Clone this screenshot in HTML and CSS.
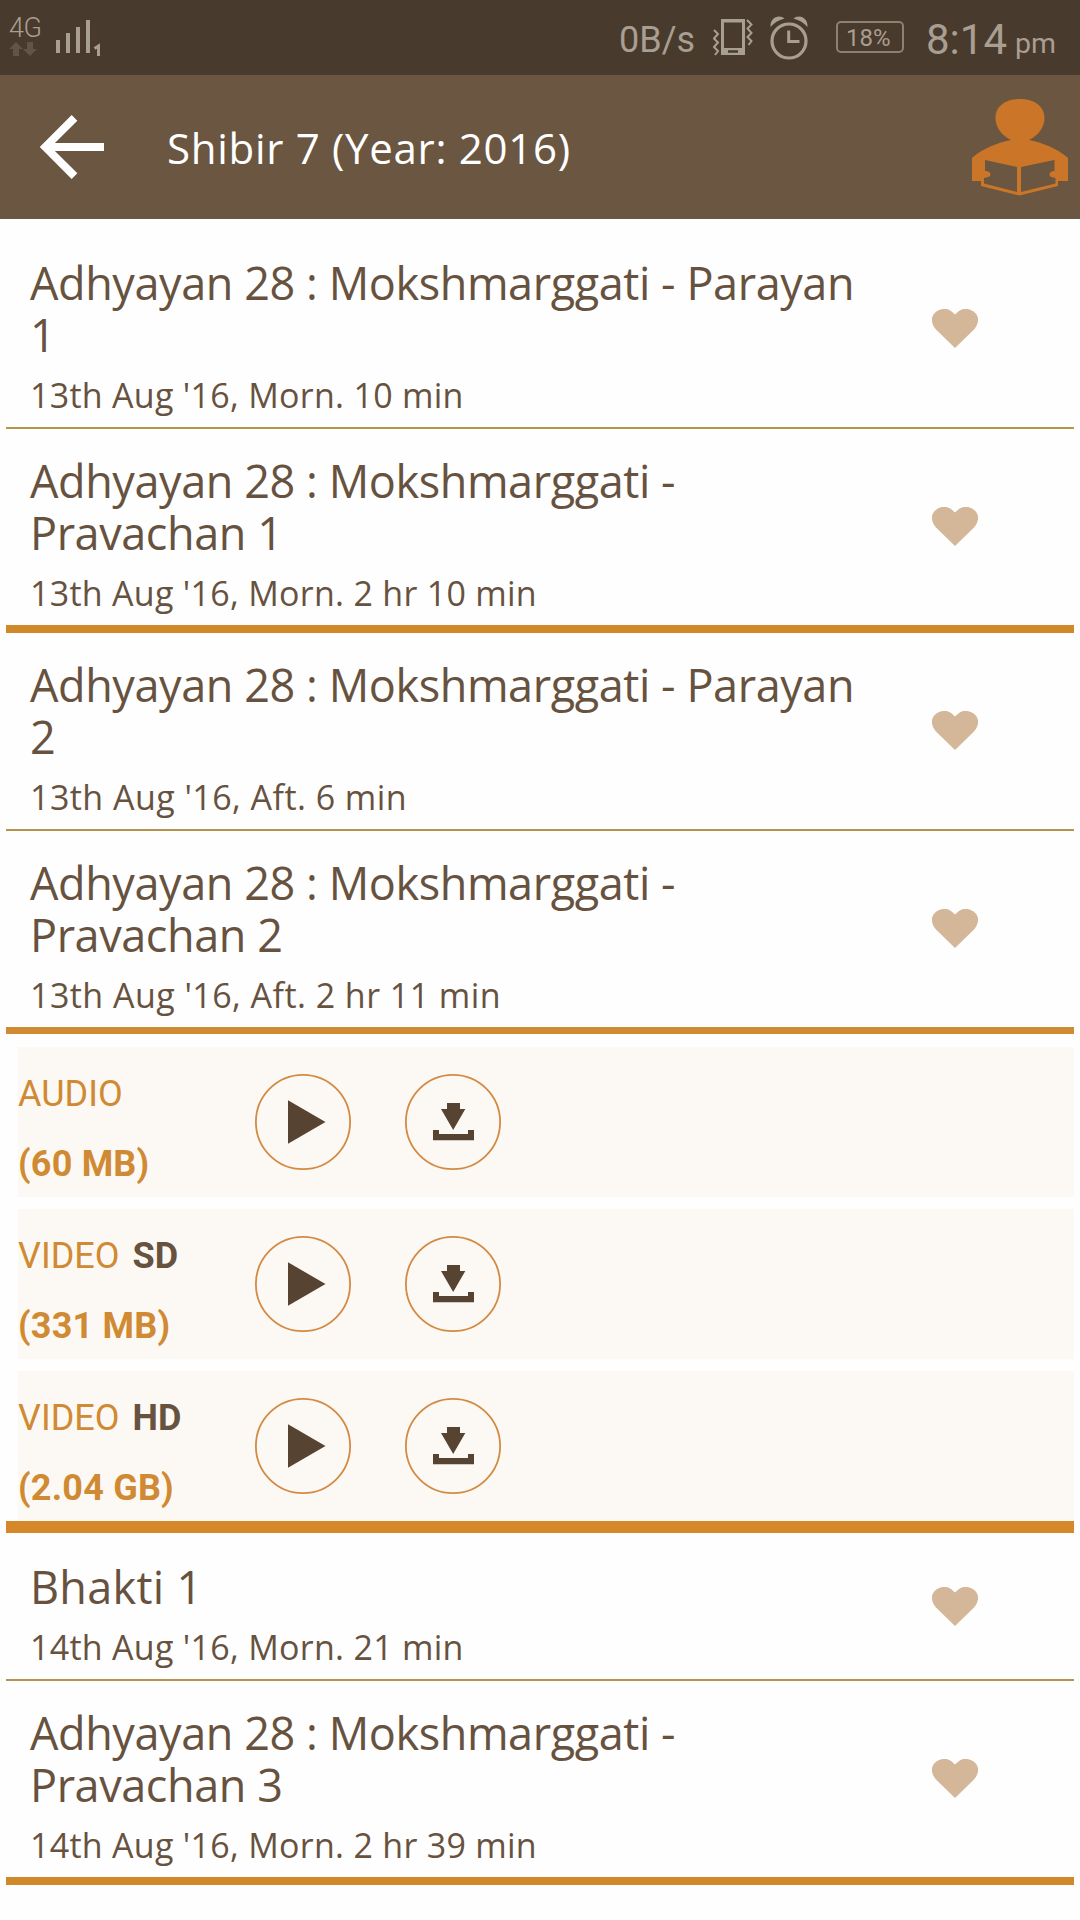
FILE: index.html
```html
<!DOCTYPE html>
<html lang="en">
<head>
<meta charset="utf-8">
<title>Shibir 7</title>
<link rel="stylesheet" href="styles.css">
</head>
<body>
<svg class="defs" width="0" height="0" aria-hidden="true">
  <symbol id="heart" viewBox="0 0 46 39"><path d="M23 39 4 20.500C-1 15-1.500 8 3 3.700 8-1.300 16-1.200 20.500 3.200L23 5.500l2.500-2.300C30-1.200 38-1.300 43 3.700 47.500 8 47 15 42 20.500Z"/></symbol>
  <symbol id="play" viewBox="0 0 96 96"><circle cx="48" cy="48" r="47.100" class="ring"/><path d="M33 26.300 70.500 48 33 69.800Z"/></symbol>
  <symbol id="download" viewBox="0 0 96 96"><circle cx="48" cy="48" r="47.100" class="ring"/><path d="M42 29h13v6h5.300L48.200 56 36 35h6ZM28 56h6v4h29v-4h6v10.200H28Z"/></symbol>
</svg>

<div class="status">
  <div class="network">
    <span class="network-type">4G</span>
    <svg class="network-arrows" width="28" height="14" viewBox="0 0 28 14"><path d="M7 0l7 7h-4v7H4V7H0ZM21 14l-7-7h4V0h6v7h4Z"/></svg>
  </div>
  <svg class="signal" width="46" height="38" viewBox="0 0 46 38"><g stroke-width="4" stroke-linecap="butt"><path d="M3 21v13M13 14v20M23 8v26M33 1v33"/><path d="M39.500 29.500 43.500 27v10" stroke-width="3" fill="none"/></g></svg>
  <span class="speed">0B/s</span>
  <svg class="vibrate" width="42" height="38" viewBox="0 0 42 38"><path fill-rule="evenodd" d="M8 0h24v36H8ZM11 3.500v25.500h18V3.500ZM15 31.200v2.500h10v-2.500Z" class="solid"/><path d="M1 11l4 4-4 4.500 4 4-4 4.500 4 4-3 4M34 1l4.500 4.500-4 4 4 4.500-4 4 4 4-3 4"/></svg>
  <svg class="alarm" width="38" height="44" viewBox="0 0 38 44"><circle cx="19" cy="25" r="17" stroke-width="3.200"/><path d="M18.700 14.500v11h10.800" stroke-width="3"/><path class="solid" d="M.5 11C0 5 4 .5 9 .5c2.500 0 4 .7 5.500 2C8.500 4 4 7 .5 11ZM37.500 11C38 5 34 .5 29 .5c-2.500 0-4 .7-5.500 2C29.500 4 34 7 37.500 11Z"/></svg>
  <span class="battery">18%</span>
  <span class="clock">8:14</span>
  <span class="meridiem">pm</span>
</div>

<header class="appbar">
  <svg class="back" width="64" height="64" viewBox="0 0 64 64"><path d="M64 32H6M34.500 2.800 5.300 32l29.200 29.200"/></svg>
  <h1 class="appbar-title">Shibir 7 (Year: 2016)</h1>
  <svg class="reader" width="96" height="97" viewBox="0 0 96 97"><path fill-rule="evenodd" d="M48 0C62 0 72.500 7 72.500 19c0 10-7 18-15.500 22 15 3 29 9 39 18v23H86v5L47.500 96.500 9 87v-5H0V59c10-9 24-15 39-18C30.500 37 23.500 29 23.500 19 23.500 7 34 0 48 0ZM13 61v11c3 0 5.500 1 5.500 3.500S15 78.500 12 79v5.500L45 93V68ZM82.500 61 49 68v25l34.500-8.500V79c-3-.5-6-1-6-3.500s2.500-3.500 5-3.500Z"/></svg>
</header>

<main class="list">
  <article class="row row--thin">
    <div class="row-text"><h2 class="title">Adhyayan 28 : Mokshmarggati - Parayan<br>1</h2><p class="meta">13th Aug '16, Morn. 10 min</p></div>
    <svg class="heart"><use href="#heart"/></svg>
  </article>
  <article class="row row--thick">
    <div class="row-text"><h2 class="title">Adhyayan 28 : Mokshmarggati -<br>Pravachan 1</h2><p class="meta">13th Aug '16, Morn. 2 hr 10 min</p></div>
    <svg class="heart"><use href="#heart"/></svg>
  </article>
  <article class="row row--thin">
    <div class="row-text"><h2 class="title">Adhyayan 28 : Mokshmarggati - Parayan<br>2</h2><p class="meta meta--loose">13th Aug '16, Aft. 6 min</p></div>
    <svg class="heart"><use href="#heart"/></svg>
  </article>
  <article class="row row--open">
    <div class="row-text"><h2 class="title">Adhyayan 28 : Mokshmarggati -<br>Pravachan 2</h2><p class="meta meta--loose">13th Aug '16, Aft. 2 hr 11 min</p></div>
    <svg class="heart"><use href="#heart"/></svg>
  </article>

  <section class="downloads">
    <div class="media">
      <div class="media-label"><span class="kind">AUDIO</span><span class="size">(60 MB)</span></div>
      <svg class="action"><use href="#play"/></svg>
      <svg class="action"><use href="#download"/></svg>
    </div>
    <div class="media">
      <div class="media-label"><span class="kind">VIDEO <b class="quality">SD</b></span><span class="size">(331 MB)</span></div>
      <svg class="action"><use href="#play"/></svg>
      <svg class="action"><use href="#download"/></svg>
    </div>
    <div class="media">
      <div class="media-label"><span class="kind">VIDEO <b class="quality">HD</b></span><span class="size">(2.04 GB)</span></div>
      <svg class="action"><use href="#play"/></svg>
      <svg class="action"><use href="#download"/></svg>
    </div>
  </section>

  <article class="row row--short row--thin">
    <div class="row-text"><h2 class="title title--loose">Bhakti 1</h2><p class="meta">14th Aug '16, Morn. 21 min</p></div>
    <svg class="heart"><use href="#heart"/></svg>
  </article>
  <article class="row row--thick">
    <div class="row-text"><h2 class="title">Adhyayan 28 : Mokshmarggati -<br>Pravachan 3</h2><p class="meta">14th Aug '16, Morn. 2 hr 39 min</p></div>
    <svg class="heart"><use href="#heart"/></svg>
  </article>
</main>
</body>
</html>
```
FILE: styles.css
```css
* { box-sizing: border-box; }
body {
  margin: 0;
  width: 1080px;
  height: 1920px;
  overflow: hidden;
  background: #fefefe;
  color: #67523f;
  font-family: "Open Sans", "Noto Sans", sans-serif;
}
h1, h2, p { margin: 0; font-weight: 400; }
svg { display: block; flex: none; }
.defs { position: absolute; }

/* Status bar */
.status {
  display: flex;
  align-items: flex-start;
  height: 75px;
  padding-left: 9px;
  background: #483a2c;
  color: #a99e92;
  font-family: Roboto, sans-serif;
  white-space: nowrap;
}
.status svg { fill: none; stroke: #a99e92; }
.status .solid { fill: #a99e92; stroke: none; }
.network { width: 46px; padding-top: 15px; }
.network-type { display: block; font-size: 27px; line-height: 27px; font-weight: 300; letter-spacing: -0.500px; }
.status .network-arrows { fill: #625446; stroke: none; }
.signal { margin-top: 19px; }
.speed { margin: 22px 0 0 518px; width: 94px; font-size: 36px; line-height: 36px; }
.vibrate { margin-top: 19px; stroke-width: 2; }
.alarm { margin: 15.500px 0 0 15px; }
.battery {
  width: 68px;
  height: 32px;
  margin: 21px 0 0 28px;
  padding-left: 8px;
  border: 2px solid #8d8174;
  border-radius: 5px;
  font-size: 24px;
  line-height: 30px;
}
.clock { margin: 19px 0 0 22px; width: 89px; font-size: 42px; line-height: 42px; }
.meridiem { margin-top: 30px; font-size: 28.500px; line-height: 28px; }

/* App bar */
.appbar {
  display: flex;
  align-items: center;
  height: 144px;
  padding: 0 12px 0 40px;
  background: #6a5641;
}
.back { fill: none; stroke: #fff; stroke-width: 8; }
.appbar-title {
  flex: 1;
  margin-left: 63px;
  padding-top: 2px;
  color: #fff;
  font-size: 42px;
  line-height: 56px;
  letter-spacing: 0.700px;
}
.reader { fill: #cb7528; }

/* Recordings */
.list { padding: 12px 6px 0; }
.row {
  display: flex;
  justify-content: space-between;
  height: 198px;
  padding: 0 96px 0 24px;
  border-bottom: 2px solid #b8924f;
}
.row--short { height: 146px; }
.row--thick { height: 204px; border-bottom: 8px solid #d08929; }
.row--open { height: 203px; border-bottom: 7px solid #d08a33; }
.row-text { padding-top: 26px; }
.title { font-size: 45px; line-height: 52px; letter-spacing: -0.420px; white-space: nowrap; }
.title--loose { letter-spacing: 0.300px; }
.meta { margin-top: 11px; font-size: 34px; line-height: 46px; letter-spacing: 0.280px; }
.meta--loose { letter-spacing: 0.450px; }
.heart { align-self: center; width: 46px; height: 39px; margin-bottom: 1px; fill: #d4b698; }

/* Downloads of the opened recording */
.downloads {
  display: grid;
  gap: 12px;
  padding: 13px 0 0 12px;
  margin-bottom: 2px;
}
.downloads::after {
  content: "";
  height: 12px;
  margin: -12px 0 0 -12px;
  background: #d5872a;
}
.media { display: flex; align-items: center; height: 150px; background: #fcf9f5; }
.media-label {
  display: flex;
  flex-direction: column;
  width: 237px;
  padding-top: 14px;
  color: #d08a33;
  font: 36px/70px Roboto, sans-serif;
}
.kind { word-spacing: 4px; }
.quality { font-weight: 700; color: #67523f; }
.size { font-weight: 700; letter-spacing: 0.200px; }
.action { width: 96px; height: 96px; margin-right: 54px; fill: #574331; }
.ring { fill: none; stroke: #d38a43; stroke-width: 1.800; }
```
